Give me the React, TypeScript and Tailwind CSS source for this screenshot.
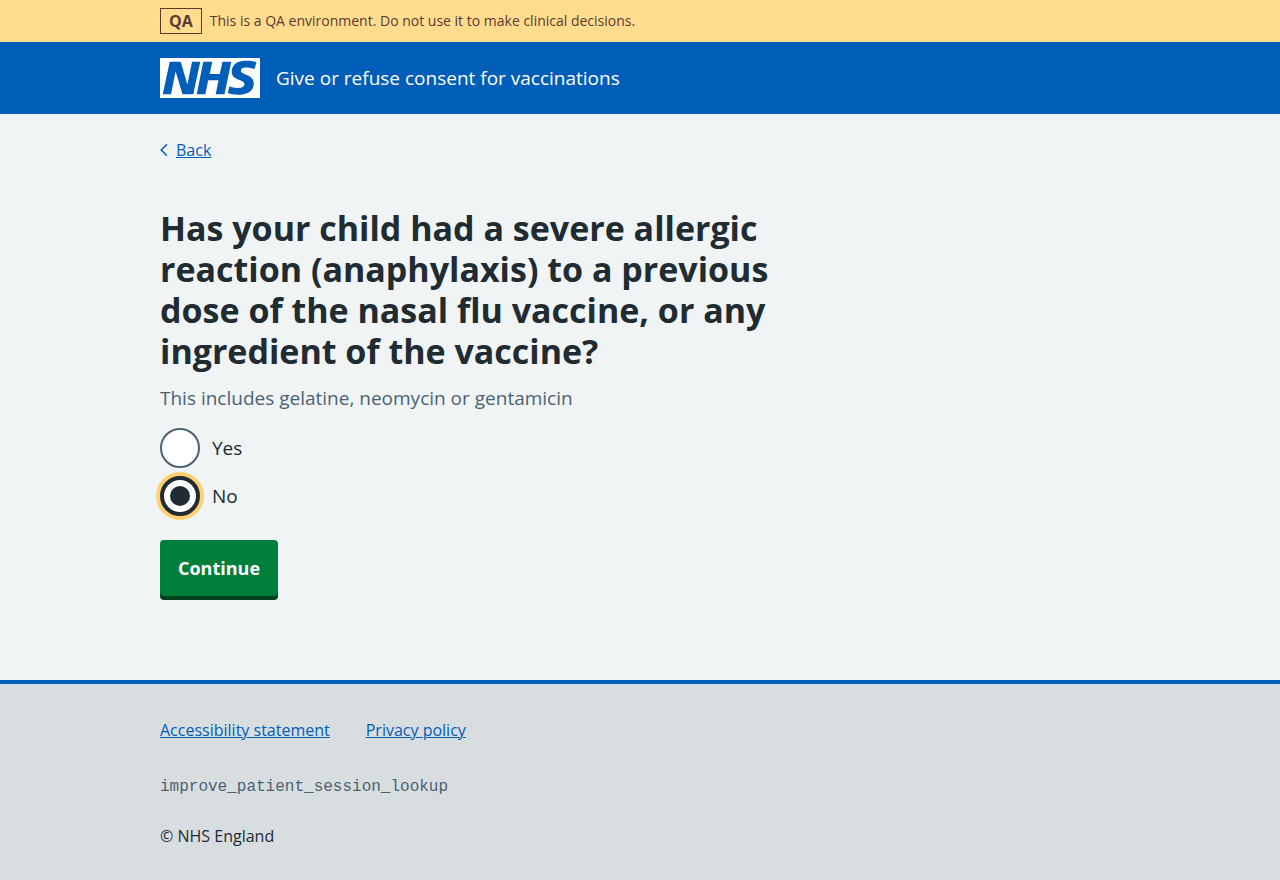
import { useState } from 'react';

const container = 'mx-auto max-w-[1024px] px-4 md:px-8';
const link = 'text-[#005eb8] underline underline-offset-1 decoration-1 hover:text-[#7c2855]';

function NhsLogo() {
  return (
    <svg className="h-10 w-[100px] shrink-0" viewBox="0 0 200 80" role="img" aria-label="NHS">
      <path
        fill="#fff"
        d="M200 0v80H0V0h200Zm-27.5 5.5c-14.5 0-29 5-29 22 0 10.2 7.7 13.5 14.7 16.3l.7.3c5.4 2 10.1 3.9 10.1 8.4 0 6.5-8.5 7.5-14 7.5s-12.5-1.5-16-3.5L135.5 70c5.5 2 13.5 3.5 20 3.5 15.5 0 32-4.5 32-22.5 0-19.5-25.5-16.5-25.5-25.5 0-5.5 5.5-6.5 12.5-6.5a35 35 0 0 1 14.5 3l4-13.5c-4.5-2-12-3-20.5-3Zm-131 2h-22l-14 65H22l9-45h.5l13.5 45h21.5l14-65H64l-9 45h-.5l-13-45Zm63 0h-18l-13 65h17l6-28H117l-5.5 28H129l13.5-65H125L119.5 32h-20l5-24.5Z"
      />
    </svg>
  );
}

const options = [
  { value: 'yes', label: 'Yes' },
  { value: 'no', label: 'No' },
];

export default function App() {
  const [answer, setAnswer] = useState('no');

  return (
    <div className="flex min-h-screen flex-col bg-[#f0f4f5] font-['Open_Sans','Noto_Sans',sans-serif] text-[#212b32]">
      <div className="bg-[#ffdc8e] text-[#5c3a2e]">
        <div className={container}>
          <div className="flex items-center gap-2 py-2 text-[14px] leading-6 font-medium">
            <strong className="border border-current px-2 text-[16px] font-bold">QA</strong>
            <span>This is a QA environment. Do not use it to make clinical decisions.</span>
          </div>
        </div>
      </div>

      <header className="bg-[#005eb8] text-white">
        <div className={container}>
          <a href="#start" className="flex items-center gap-4 py-4 text-[19px] leading-6">
            <NhsLogo />
            <span>Give or refuse consent for vaccinations</span>
          </a>
        </div>
      </header>

      <main className="grow">
        <div className={container}>
          <a href="#back" className="mt-6 inline-flex items-center gap-2 text-[16px] leading-6 text-[#005eb8]">
            <svg className="h-3 w-2" viewBox="0 0 8 12" fill="none" stroke="currentColor" strokeWidth="1.5" aria-hidden="true">
              <path d="M6.5 0.7 1.2 6 6.5 11.3" strokeLinecap="round" />
            </svg>
            <span className={link}>Back</span>
          </a>

          <form className="max-w-[640px] pt-[46px] pb-20" onSubmit={(e) => e.preventDefault()}>
            <fieldset aria-describedby="hint">
              <legend>
                <h1 className="text-[34px] leading-[41px] font-bold">
                  Has your child had a severe allergic reaction (anaphylaxis) to a previous dose of the nasal flu vaccine, or any ingredient of the vaccine?
                </h1>
              </legend>
              <p id="hint" className="mt-3 mb-4 text-[19px] leading-7 text-[#4c6272]">
                This includes gelatine, neomycin or gentamicin
              </p>
              <div className="flex flex-col gap-2">
                {options.map(({ value, label }) => (
                  <div key={value} className="flex items-center gap-3">
                    <input
                      type="radio"
                      name="answer"
                      id={value}
                      value={value}
                      checked={answer === value}
                      onChange={() => setAnswer(value)}
                      className="flex size-10 appearance-none items-center justify-center rounded-full border-2 border-[#4c6272] bg-white outline-none checked:border-4 checked:border-[#212b32] checked:shadow-[0_0_0_4px_#ffd071] before:size-5 before:rounded-full checked:before:bg-[#212b32]"
                    />
                    <label htmlFor={value} className="text-[19px] leading-7">
                      {label}
                    </label>
                  </div>
                ))}
              </div>
            </fieldset>
            <button
              type="submit"
              className="mt-6 mb-1 rounded-[4px] bg-[#007f3b] px-[18px] py-[14px] text-[18px] leading-7 font-bold text-white shadow-[0_4px_0_#00401e]"
            >
              Continue
            </button>
          </form>
        </div>
      </main>

      <footer className="border-t-4 border-[#005eb8] bg-[#d8dde0] text-[16px] leading-6">
        <div className={container}>
          <div className="pt-[34px] pb-8">
            <nav className="flex flex-wrap gap-x-9 gap-y-2">
              <a href="#accessibility" className={link}>Accessibility statement</a>
              <a href="#privacy" className={link}>Privacy policy</a>
            </nav>
            <p className="mt-[33px] font-['Liberation_Mono',monospace] text-[#4c6272]">improve_patient_session_lookup</p>
            <p className="mt-[25px]">© NHS England</p>
          </div>
        </div>
      </footer>
    </div>
  );
}
